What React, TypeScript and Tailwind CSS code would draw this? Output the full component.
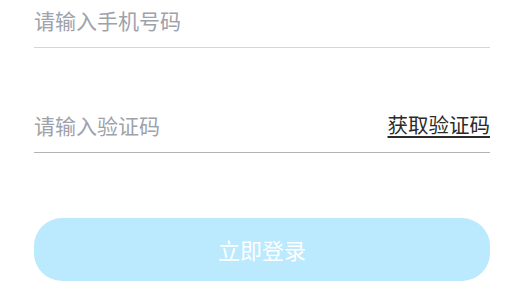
export default function App() {
  return (
    <div
      className="w-[524px] h-[297px] bg-white overflow-hidden px-[34px]"
      style={{ fontFamily: '"Noto Sans CJK SC", "Noto Sans", sans-serif' }}
    >
      <div className="flex items-end h-[48px] pb-[13px] border-b border-[#d6d6d8]">
        <input
          className="w-full h-[28px] text-[21px] leading-[28px] text-[#333] placeholder-[#9ea2aa] outline-none bg-transparent"
          placeholder="请输入手机号码"
        />
      </div>
      <div className="flex items-end justify-between h-[105px] pb-[13px] border-b border-[#b4b4b6]">
        <input
          className="flex-1 min-w-0 h-[28px] text-[21px] leading-[28px] text-[#333] placeholder-[#9ea2aa] outline-none bg-transparent"
          placeholder="请输入验证码"
        />
        <span className="h-[28px] text-[20.5px] leading-[27px] text-[#2b2b2b] underline underline-offset-[3px]">
          获取验证码
        </span>
      </div>
      <button className="mt-[65px] w-full h-[63px] rounded-[28px] bg-[#bbe9fe] text-white text-[22px] flex items-center justify-center">
        立即登录
      </button>
    </div>
  );
}
